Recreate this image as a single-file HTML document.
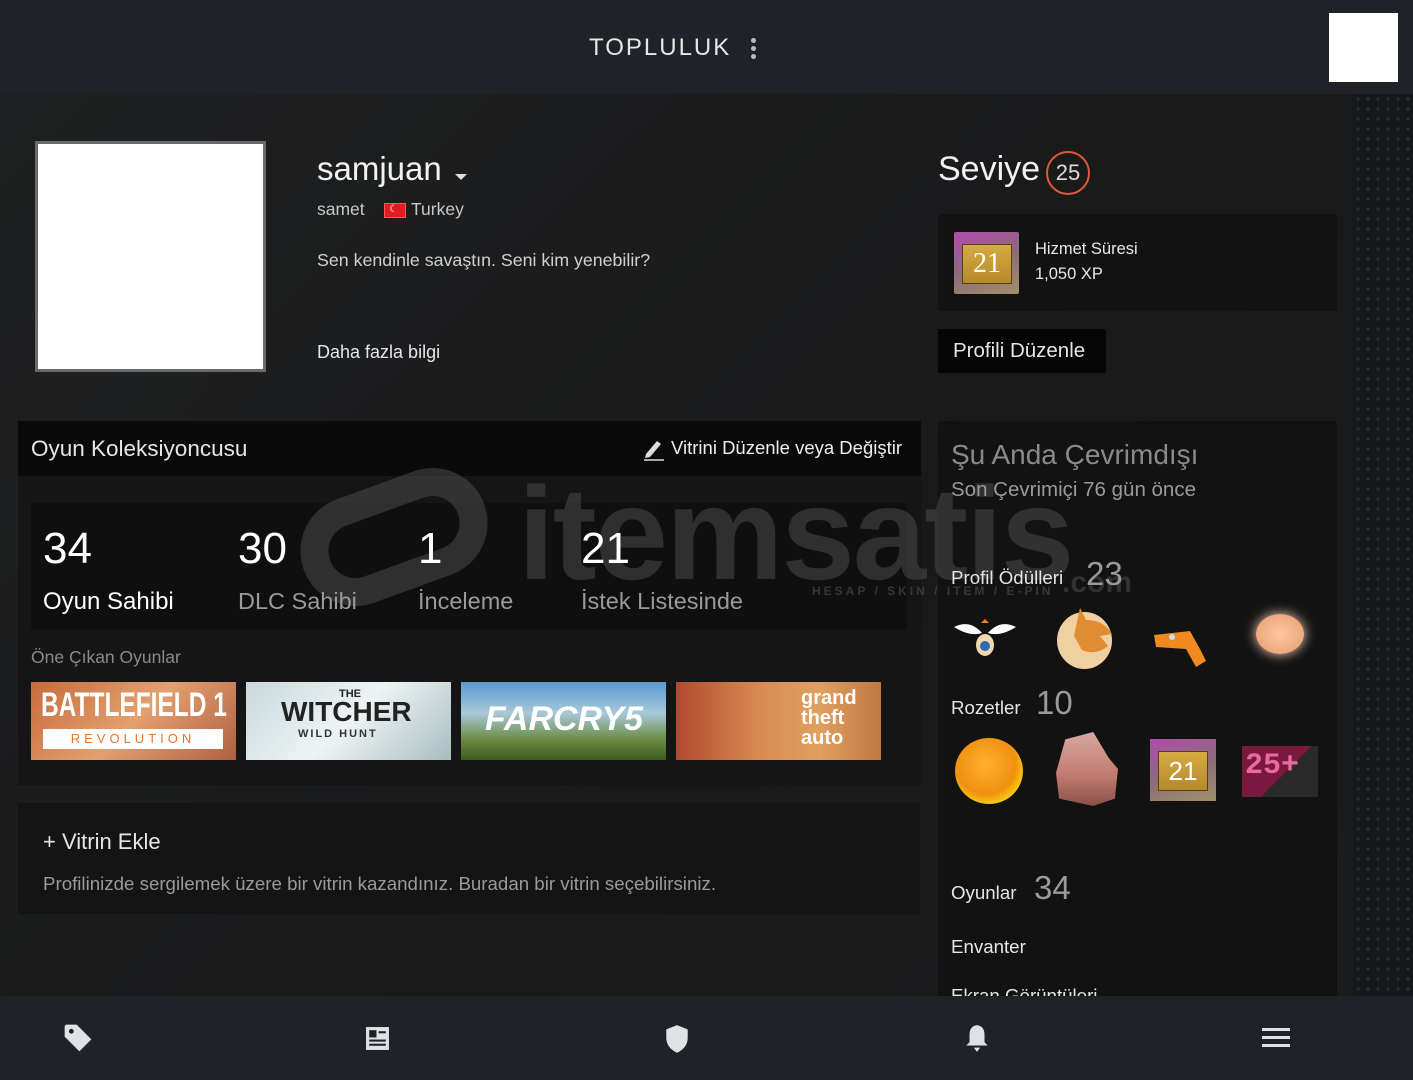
<!DOCTYPE html>
<html><head><meta charset="utf-8">
<style>
*{margin:0;padding:0;box-sizing:border-box}
body{width:1413px;height:1080px;overflow:hidden;background:#1b1c1e;font-family:"Liberation Sans","DejaVu Sans",sans-serif;color:#fff;position:relative}
.a{position:absolute}
.top{left:0;top:0;width:1413px;height:94px;background:#202227}
.bot{left:0;top:996px;width:1413px;height:84px;background:#202227}
.main{left:0;top:94px;width:1353px;height:902px;background:linear-gradient(135deg,#1f2021,#19191a 60%,#1c1c1d)}
.strip{left:1353px;top:94px;width:60px;height:902px;background-color:#16181b;background-image:radial-gradient(#2a3036 1.5px,transparent 1.6px);background-size:10px 10px}
.t{white-space:nowrap}
.cap{top:682px;width:205px;height:78px}
</style></head><body>
<div class="a top"></div>
<div class="a t" style="left:589px;top:34px;font-size:24px;letter-spacing:2px;color:#e6e6e6">TOPLULUK</div>
<div class="a" style="left:751px;top:38px;width:5px;height:5px;border-radius:50%;background:#bbb;box-shadow:0 8px 0 #bbb,0 16px 0 #bbb"></div>
<div class="a" style="left:1329px;top:13px;width:69px;height:69px;background:#fff"></div>

<div class="a main"></div>
<div class="a strip"></div>

<div class="a" style="left:35px;top:141px;width:231px;height:231px;background:#fff;border:3px solid #6a6a6a"></div>
<div class="a t" style="left:317px;top:150px;font-size:33px;color:#f2f2f2">samjuan</div>
<div class="a" style="left:455px;top:174px;border-left:6px solid transparent;border-right:6px solid transparent;border-top:6px solid #ddd"></div>
<div class="a t" style="left:317px;top:199px;font-size:17.5px;color:#c8c8c8">samet</div>
<div class="a" style="left:384px;top:203px;width:22px;height:15px;background:#e21b22;border:1px solid #f55"></div>
<div class="a t" style="left:389px;top:204px;font-size:10px;color:#fff">☾</div>
<div class="a t" style="left:411px;top:199px;font-size:17.5px;color:#c8c8c8">Turkey</div>
<div class="a t" style="left:317px;top:250px;font-size:17.8px;color:#d0d0d0">Sen kendinle savaştın. Seni kim yenebilir?</div>
<div class="a t" style="left:317px;top:342px;font-size:18px;color:#e6e6e6">Daha fazla bilgi</div>

<div class="a t" style="left:938px;top:150px;font-size:34px;color:#f2f2f2">Seviye</div>
<div class="a" style="left:1046px;top:151px;width:44px;height:44px;border:2px solid #e05a3c;border-radius:50%;text-align:center;line-height:40px;font-size:22px;color:#ddd">25</div>
<div class="a" style="left:938px;top:214px;width:399px;height:97px;background:#121212;border-radius:3px"></div>
<div class="a" style="left:954px;top:232px;width:65px;height:62px;background:linear-gradient(160deg,#b24ab0,#8c6c7a 50%,#a0906a);border-radius:2px"></div>
<div class="a" style="left:962px;top:244px;width:50px;height:40px;background:linear-gradient(#d6aa45,#b58a2a);border:1px solid #5a4010;text-align:center;font-family:'Liberation Serif',serif;font-size:28px;line-height:38px;color:#fff">21</div>
<div class="a t" style="left:1035px;top:240px;font-size:16.5px;color:#e8e8e8">Hizmet Süresi</div>
<div class="a t" style="left:1035px;top:265px;font-size:16.5px;color:#e8e8e8">1,050 XP</div>
<div class="a" style="left:938px;top:329px;width:168px;height:44px;background:#050505;border-radius:2px"></div>
<div class="a t" style="left:953px;top:339px;font-size:20.5px;color:#e6e6e6">Profili Düzenle</div>

<!-- panel backgrounds -->
<div class="a" style="left:18px;top:421px;width:903px;height:364px;background:#151515"></div>
<div class="a" style="left:18px;top:421px;width:903px;height:55px;background:#0a0a0a"></div>
<div class="a" style="left:31px;top:503px;width:876px;height:127px;background:#0f0f0f;border-radius:3px"></div>
<div class="a" style="left:938px;top:421px;width:399px;height:575px;background:#121212;border-radius:3px 3px 0 0"></div>

<!-- watermark -->
<div class="a" style="left:298px;top:482px;width:192px;height:110px;border:28px solid rgba(80,80,80,.5);border-radius:55px;transform:rotate(-20deg)"></div>
<div class="a t" style="left:518px;top:458px;font-size:132px;font-weight:bold;color:rgba(80,80,80,.5);letter-spacing:-2px">itemsatis</div>
<div class="a t" style="left:812px;top:584px;font-size:12px;font-weight:bold;color:rgba(80,80,80,.6);letter-spacing:3px">HESAP / SKIN / ITEM / E-PIN</div>
<div class="a t" style="left:1062px;top:566px;font-size:30px;font-weight:bold;color:rgba(80,80,80,.5)">.com</div>

<div class="a t" style="left:31px;top:436px;font-size:22.5px;color:#e6e6e6">Oyun Koleksiyoncusu</div>
<svg class="a" style="left:642px;top:437px" width="24" height="24" viewBox="0 0 24 24"><path d="M4 17 L15 4 L19 7 L8 20 L3 21 Z" fill="#ddd"/><path d="M2 23 H22" stroke="#ddd" stroke-width="1.5"/></svg>
<div class="a t" style="left:671px;top:437px;font-size:18.5px;color:#eee">Vitrini Düzenle veya Değiştir</div>

<div class="a t" style="left:43px;top:524px;font-size:44px;color:#fff;font-weight:300">34</div>
<div class="a t" style="left:43px;top:588px;font-size:24px;color:#fff">Oyun Sahibi</div>
<div class="a t" style="left:238px;top:524px;font-size:44px;color:#fff">30</div>
<div class="a t" style="left:238px;top:588px;font-size:23.5px;color:#9a9a9a">DLC Sahibi</div>
<div class="a t" style="left:418px;top:524px;font-size:44px;color:#fff">1</div>
<div class="a t" style="left:418px;top:588px;font-size:23.5px;color:#9a9a9a">İnceleme</div>
<div class="a t" style="left:581px;top:524px;font-size:44px;color:#fff">21</div>
<div class="a t" style="left:581px;top:588px;font-size:23.5px;color:#9a9a9a">İstek Listesinde</div>
<div class="a t" style="left:31px;top:647px;font-size:17.5px;color:#8a8a8a">Öne Çıkan Oyunlar</div>
<div class="a cap" style="left:31px;background:linear-gradient(135deg,#c86a3a,#e3a070 50%,#b06040)"><div class="a t" style="left:10px;top:4px;font-size:34px;font-weight:bold;color:#fff;transform:scaleX(.72);transform-origin:left">BATTLEFIELD 1</div><div class="a" style="left:12px;top:47px;width:180px;height:20px;background:#fff;color:#e07a30;font-size:13px;letter-spacing:4px;text-align:center;line-height:20px">REVOLUTION</div></div>
<div class="a cap" style="left:246px;background:linear-gradient(135deg,#c8d8dc,#eef4f4 50%,#a8bcc0)"><div class="a t" style="left:93px;top:6px;font-size:11px;font-weight:bold;color:#222">THE</div><div class="a t" style="left:35px;top:14px;font-size:28px;font-weight:bold;color:#222">WITCHER</div><div class="a t" style="left:52px;top:46px;font-size:11px;font-weight:bold;color:#333;letter-spacing:2px">WILD  HUNT</div></div>
<div class="a cap" style="left:461px;background:linear-gradient(#5a9ad0,#a8c8d8 40%,#6a8a40 75%,#3a5a20)"><div class="a t" style="left:24px;top:18px;font-size:34px;font-weight:bold;font-style:italic;color:#fff">FARCRY5</div></div>
<div class="a cap" style="left:676px;background:linear-gradient(90deg,#b04a30,#d88a50 40%,#e0a060 70%,#c07840)"><div class="a t" style="left:125px;top:6px;font-size:20px;line-height:20px;font-weight:bold;color:#fff">grand<br>theft<br>auto</div></div>

<div class="a" style="left:18px;top:803px;width:902px;height:111px;background:#141414"></div>
<div class="a t" style="left:43px;top:829px;font-size:22px;color:#e6e6e6">+ Vitrin Ekle</div>
<div class="a t" style="left:43px;top:873px;font-size:18.7px;color:#9a9a9a">Profilinizde sergilemek üzere bir vitrin kazandınız. Buradan bir vitrin seçebilirsiniz.</div>

<!-- right panel content -->
<div class="a t" style="left:951px;top:439px;font-size:28px;color:#8a8a8a;font-weight:300">Şu Anda Çevrimdışı</div>
<div class="a t" style="left:951px;top:478px;font-size:20.5px;color:#9a9a9a">Son Çevrimiçi 76 gün önce</div>
<div class="a t" style="left:951px;top:567px;font-size:18.7px;color:#e6e6e6">Profil Ödülleri</div>
<div class="a t" style="left:1086px;top:555px;font-size:33px;color:#9a9a9a">23</div>
<svg class="a" style="left:952px;top:615px" width="66" height="44" viewBox="0 0 66 44"><path d="M2 12 Q18 4 30 18 Q18 22 2 12Z M64 12 Q48 4 36 18 Q48 22 64 12Z" fill="#fff"/><ellipse cx="33" cy="30" rx="9" ry="11" fill="#f0d8b0"/><circle cx="33" cy="31" r="5" fill="#2a6ab0"/><path d="M29 8 L33 4 L37 8Z" fill="#f08020"/></svg>
<div class="a" style="left:1057px;top:612px;width:55px;height:57px;border-radius:50%;background:#f0d0a0"></div>
<svg class="a" style="left:1060px;top:606px" width="56" height="60" viewBox="0 0 56 60"><path d="M20 2 L26 14 Q44 14 52 28 L40 30 L48 40 Q36 50 22 44 L14 30Z" fill="#e08c30"/></svg>
<svg class="a" style="left:1150px;top:625px" width="60" height="45" viewBox="0 0 60 45"><path d="M4 10 L40 6 L50 24 L56 36 L46 42 L36 24 L6 22Z" fill="#f08a20"/><circle cx="22" cy="12" r="3" fill="#cde"/><path d="M20 3 H40" stroke="#111" stroke-width="3"/></svg>
<div class="a" style="left:1256px;top:614px;width:48px;height:40px;border-radius:50%;background:radial-gradient(#fcc8a0,#e89a70);box-shadow:0 0 12px #ffd8c0"></div>
<div class="a t" style="left:951px;top:697px;font-size:18.7px;color:#e6e6e6">Rozetler</div>
<div class="a t" style="left:1036px;top:684px;font-size:33px;color:#9a9a9a">10</div>
<div class="a" style="left:955px;top:738px;width:68px;height:66px;border-radius:50%;background:radial-gradient(circle at 45% 40%,#ffb030,#f09010 55%,#f8d010 75%,#d08000)"></div>
<div class="a" style="left:1056px;top:732px;width:62px;height:74px;background:linear-gradient(#d8a8a0,#c07a70 60%,#8a5048);clip-path:polygon(15% 10%,60% 0,85% 35%,100% 50%,95% 90%,60% 100%,5% 90%,0 55%)"></div>
<div class="a" style="left:1150px;top:739px;width:66px;height:62px;background:linear-gradient(160deg,#b24ab0,#8c6c7a 50%,#a0906a)"></div>
<div class="a" style="left:1158px;top:751px;width:50px;height:40px;background:linear-gradient(#d6aa45,#b58a2a);border:1px solid #5a4010;text-align:center;font-size:26px;line-height:38px;color:#fff">21</div>
<div class="a" style="left:1242px;top:746px;width:76px;height:51px;background:linear-gradient(135deg,#7a1840 55%,#2a2a2a 55%)"></div>
<div class="a t" style="left:1245px;top:749px;font-size:30px;font-weight:bold;color:#e86aa0;font-family:'Liberation Mono',monospace">25+</div>
<div class="a t" style="left:951px;top:882px;font-size:18.7px;color:#e6e6e6">Oyunlar</div>
<div class="a t" style="left:1034px;top:869px;font-size:33px;color:#9a9a9a">34</div>
<div class="a t" style="left:951px;top:936px;font-size:18.7px;color:#e6e6e6">Envanter</div>
<div class="a t" style="left:951px;top:985px;font-size:18.7px;color:#e6e6e6;height:11px;overflow:hidden">Ekran Görüntüleri</div>

<div class="a bot"></div>
<svg class="a" style="left:62px;top:1022px" width="32" height="32" viewBox="0 0 24 24"><path d="M2 3 V11 L13 22 L22 13 L11 2 H3Z" fill="#dfe1e5"/><circle cx="7" cy="7" r="1.8" fill="#202227"/></svg>
<svg class="a" style="left:365px;top:1026px" width="25" height="25" viewBox="0 0 24 24"><rect x="1" y="1" width="22" height="22" fill="#dfe1e5"/><rect x="4" y="4" width="7" height="7" fill="#202227"/><rect x="4" y="13" width="16" height="2" fill="#202227"/><rect x="4" y="17" width="16" height="2" fill="#202227"/><rect x="13" y="5" width="7" height="2" fill="#202227"/></svg>
<svg class="a" style="left:664px;top:1024px" width="26" height="30" viewBox="0 0 24 28"><path d="M12 1 L22 5 V13 Q22 22 12 27 Q2 22 2 13 V5Z" fill="#dfe1e5"/></svg>
<svg class="a" style="left:964px;top:1023px" width="26" height="30" viewBox="0 0 24 28"><path d="M12 2 Q19 3 19 11 V18 L22 21 H2 L5 18 V11 Q5 3 12 2Z M9 23 H15 L12 27Z" fill="#dfe1e5"/></svg>
<div class="a" style="left:1262px;top:1028px;width:28px;height:3px;background:#dfe1e5;box-shadow:0 8px 0 #dfe1e5,0 16px 0 #dfe1e5"></div>
</body></html>
